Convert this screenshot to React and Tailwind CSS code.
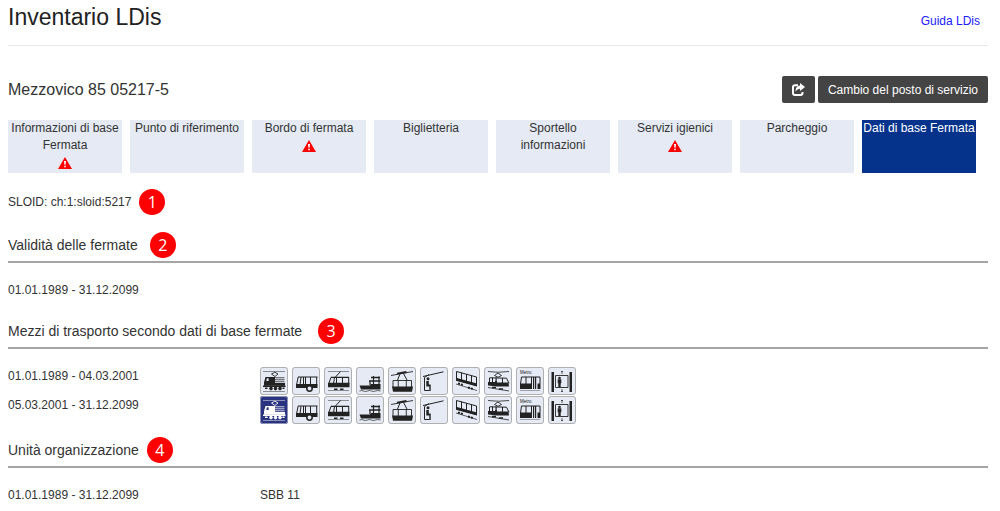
import React from "react";

const tabs = [
  { label: "Informazioni di base Fermata", warning: true },
  { label: "Punto di riferimento" },
  { label: "Bordo di fermata", warning: true },
  { label: "Biglietteria" },
  { label: "Sportello informazioni" },
  { label: "Servizi igienici", warning: true },
  { label: "Parcheggio" },
  { label: "Dati di base Fermata", active: true },
];

const drawings = {
  Treno: (
    <>
      <path d="M3 4.5h22M3 24.5h22" stroke="currentColor" strokeWidth=".8" opacity=".6" />
      <path d="M11.5 7l3.300-1.800L18 7l-3 2.500z" fill="none" stroke="currentColor" strokeWidth=".9" />
      <path d="M5.500 10h9.500v6h10v2.800H4v-3.600z" fill="currentColor" />
      <path d="M6.800 11.300h1.800v2.700H6.300z" fill="var(--tile)" />
      <path d="M15 10.700h9.500M15 12.700h9.500M15 14.700h9.500" stroke="currentColor" strokeWidth="1.100" opacity=".75" />
      <path d="M3 19.300h22.500" stroke="currentColor" strokeWidth="1.400" />
      <circle cx="11" cy="21.600" r="1.800" fill="currentColor" />
      <circle cx="15.500" cy="21.600" r="1.800" fill="currentColor" />
      <circle cx="20" cy="21.600" r="1.800" fill="currentColor" />
      <path d="M5 20.500h2.500v1.500H5zM22.500 20.500h2v1.500h-2z" fill="currentColor" />
    </>
  ),
  Autobus: (
    <>
      <path d="M6 10h19.500" stroke="currentColor" strokeWidth="1.200" />
      <path d="M4 17h21.500v4H4z" fill="currentColor" />
      <path d="M6.200 10L4.500 18M9 10l-1 8M11.500 10v8M13.500 10v8M18.500 10v8M24.700 10v8" stroke="currentColor" strokeWidth="1" />
      <circle cx="17.500" cy="21.500" r="2.700" fill="var(--tile)" stroke="currentColor" strokeWidth="1.500" />
    </>
  ),
  Tram: (
    <>
      <path d="M4 4.500h21M4 23.500h21" stroke="currentColor" strokeWidth=".8" opacity=".6" />
      <path d="M16.500 4.500L11.500 10" stroke="currentColor" />
      <path d="M7 10.300h18" stroke="currentColor" strokeWidth="1.200" />
      <path d="M4 15.800h21.500v4.400H4z" fill="currentColor" />
      <path d="M7 10.300L4.700 17M10.500 10.300L9.500 17M12.500 10.300V17M18.500 10.300V17M24.700 10.300V17" stroke="currentColor" />
      <path d="M10 22.300h3.500M16 22.300h3.500" stroke="currentColor" strokeWidth="1.600" />
    </>
  ),
  Battello: (
    <>
      <path d="M3.500 18.500h10.500l1-1.500H24.500v5.500H5z" fill="currentColor" />
      <path d="M15 10.500h9M13 14h11.500" stroke="currentColor" strokeWidth="1.300" />
      <path d="M17.500 9v8.500M23 9.500v8M14 14v4" stroke="currentColor" strokeWidth="1.200" />
      <path d="M3.500 24q2-1 4 0t4 0 4 0 4 0 5 0" fill="none" stroke="currentColor" strokeWidth=".7" />
    </>
  ),
  Cabinovia: (
    <>
      <path d="M3 8.500l22-4" stroke="currentColor" strokeWidth=".9" />
      <path d="M9 6.700l9.500-1.700" stroke="currentColor" strokeWidth="1.800" />
      <path d="M12 7L9.500 13M15.500 6.500l3.500 6.500" stroke="currentColor" />
      <path d="M5 13.500h18.500v7H5z" fill="none" stroke="currentColor" strokeWidth=".9" />
      <path d="M4 19.500h21l-1 5.300H5zM9.800 13h.9v7h-.9zM17.800 13h.9v7h-.9z" fill="currentColor" />
    </>
  ),
  Seggiovia: (
    <>
      <path d="M3 9.500L23.500 4.800" stroke="currentColor" />
      <path d="M9 7.500L4.500 10.500v13h5" fill="none" stroke="currentColor" />
      <circle cx="8" cy="11.800" r="1.500" fill="currentColor" />
      <path d="M6.300 14h2.500v3.500h1.900v6.500H9.300v-4.500h-3z" fill="currentColor" />
    </>
  ),
  Funicolare: (
    <>
      <path d="M4.500 4.500L24.500 10v8.500L4.500 13z" fill="none" stroke="currentColor" />
      <path d="M4 10.800l21 5.700v3L4 13.800zM9 5.500h1v7H9zM14 7h1v7h-1zM19 8.500h1v7h-1z" fill="currentColor" />
      <path d="M4 17l21 6.500" stroke="currentColor" strokeWidth=".7" />
      <path d="M6 16.500l5 1.500M16 20.500l5 1.500" stroke="currentColor" strokeWidth="2" strokeDasharray="2 1" />
    </>
  ),
  Cremagliera: (
    <>
      <path d="M4 4.500q10 1.500 21 0M4 20.500L25 24" fill="none" stroke="currentColor" strokeWidth=".8" />
      <path d="M10.500 8.500L14 6l3.500 2.500-3.500 1.800z" fill="none" stroke="currentColor" strokeWidth=".9" />
      <path d="M5.500 10.800l17 .4 2.500 5" fill="none" stroke="currentColor" />
      <path d="M4 15h7v-1h2v1.500h11.500l.5 4H13L4 18.500zM8 10.500h1v5H8zM11.500 10.500h1.200v5h-1.200zM18 11h1v5h-1zM5 11h1v5H5z" fill="currentColor" />
      <path d="M8 20.500h4M15 22h4" stroke="currentColor" strokeWidth="1.600" />
    </>
  ),
  Metro: (
    <>
      <text x="4" y="6.500" fontSize="4.500" fill="currentColor">Metro</text>
      <path d="M5.500 10h18.500" stroke="currentColor" strokeWidth="1.200" />
      <path d="M4 16.500h11.500V22H4zM9.500 10h1v7h-1zM15 10h1v12h-1zM17 10h1.200v12H17zM19 10h1.200v12H19zM21.500 16.500h3V22h-3zM23.500 10h1v7h-1z" fill="currentColor" />
      <path d="M5.500 10L4.500 17" stroke="currentColor" />
      <path d="M4 23.500h20" stroke="currentColor" strokeWidth=".6" opacity=".6" />
    </>
  ),
  Ascensore: (
    <>
      <path d="M3.500 5H6V25H3.500zM21.500 5H24V25h-2.500z" fill="currentColor" />
      <path d="M7.500 8.500h12.500v12H7.500z" fill="none" stroke="currentColor" strokeWidth=".9" />
      <circle cx="11.500" cy="11" r="1.300" fill="currentColor" />
      <path d="M9.700 12.300h3.600v4h-.6v3.700h-2.400v-3.700h-.6z" fill="currentColor" />
      <path d="M14 7V4M13 5l1-1 1 1M14 22V25M13 24l1 1 1-1" fill="none" stroke="currentColor" strokeWidth=".7" />
    </>
  ),
};

function Warning() {
  return (
    <svg viewBox="0 0 14 12" className="h-3 w-3.5" role="img" aria-label="Attenzione">
      <path d="M7 0l7 12H0z" fill="#ff0000" />
      <path d="M6 4h2l-.4 3.800H6.400zM6.200 8.800h1.600v1.500H6.200z" fill="#fff" />
    </svg>
  );
}

function Badge({ children }) {
  return (
    <span className="flex size-[26px] shrink-0 items-center justify-center rounded-full bg-[#ff0000] font-['Open_Sans',sans-serif] text-base leading-none text-white">
      {children}
    </span>
  );
}

function Heading({ number, gap = "gap-2", children }) {
  return (
    <h3 className={`flex h-[31px] items-start border-b-2 border-[#a5a5a5] text-sm leading-[26px] ${gap}`}>
      {children}
      <Badge>{number}</Badge>
    </h3>
  );
}

function Transport({ name, active }) {
  return (
    <svg
      viewBox="0 0 28 28"
      role="img"
      aria-label={name}
      className={`size-7 rounded-[3px] outline -outline-offset-1 ${
        active
          ? "bg-[#2a3480] text-white outline-[#8e93b5] [--tile:#2a3480]"
          : "bg-[#e5eaf4] text-[#222222] outline-[#b0b0b0] [--tile:#e5eaf4]"
      }`}
    >
      {drawings[name]}
    </svg>
  );
}

function Period({ dates, active }) {
  return (
    <div className="flex h-[29px] items-start">
      <span className="w-[252px] shrink-0 leading-[18px]">{dates}</span>
      <div className="flex gap-1">
        {Object.keys(drawings).map((name) => (
          <Transport key={name} name={name} active={name === active} />
        ))}
      </div>
    </div>
  );
}

export default function App() {
  return (
    <main className="bg-white pr-3 pb-2 pl-2 font-['Liberation_Sans',Arial,sans-serif] text-xs text-[#333333]">
      <header className="flex h-[46px] items-start justify-between border-b border-[#e8e8e8] pr-2">
        <h1 className="text-[23px] leading-[34px] text-[#222222]">Inventario LDis</h1>
        <a href="#guida" className="pt-3 leading-[18px] text-[#2020ff]">Guida LDis</a>
      </header>

      <div className="mt-[30px] flex items-center justify-between">
        <h2 className="text-base">Mezzovico 85 05217-5</h2>
        <div className="flex gap-[3px]">
          <button type="button" aria-label="Condividi" className="flex h-[27px] w-[33px] items-center justify-center rounded-xs bg-[#444444] text-white">
            <svg viewBox="0 0 14 14" className="size-3.5" aria-hidden="true">
              <path d="M7 2.300H4Q2 2.300 2 4.300V10Q2 12 4 12h5.500q2 0 2-2V9" fill="none" stroke="currentColor" strokeWidth="2" />
              <path d="M9 0l5 4-5 4V5.700Q6.500 5.500 4.500 8.500 4.500 3 9 2.500z" fill="currentColor" />
            </svg>
          </button>
          <button type="button" className="h-[27px] rounded-xs bg-[#444444] px-2.5 text-xs text-white">
            Cambio del posto di servizio
          </button>
        </div>
      </div>

      <nav className="mt-[17px] mr-3 grid grid-cols-8 gap-2" aria-label="Sezioni">
        {tabs.map((tab) => (
          <button
            key={tab.label}
            type="button"
            aria-current={tab.active ? "page" : undefined}
            className={`flex h-[53px] flex-col items-center leading-[17px] ${
              tab.active ? "bg-[#05338b] text-white" : "bg-[#e5eaf4]"
            }`}
          >
            <span>{tab.label}</span>
            {tab.warning && (
              <span className="flex h-[17px] items-center">
                <Warning />
              </span>
            )}
          </button>
        ))}
      </nav>

      <p className="mt-4 flex items-center gap-2 leading-[26px]">
        SLOID: ch:1:sloid:5217 <Badge>1</Badge>
      </p>

      <section className="mt-[17px]">
        <Heading number={2} gap="gap-3">Validità delle fermate</Heading>
        <p className="mt-[18px] leading-[18px]">01.01.1989 - 31.12.2099</p>
      </section>

      <section className="mt-[19px]">
        <Heading number={3} gap="gap-4">Mezzi di trasporto secondo dati di base fermate</Heading>
        <div className="mt-[18px]">
          <Period dates="01.01.1989 - 04.03.2001" />
          <Period dates="05.03.2001 - 31.12.2099" active="Treno" />
        </div>
      </section>

      <section className="mt-3">
        <Heading number={4}>Unità organizzazione</Heading>
        <div className="mt-[18px] flex leading-[18px]">
          <span className="w-[252px] shrink-0">01.01.1989 - 31.12.2099</span>
          <span>SBB 11</span>
        </div>
      </section>
    </main>
  );
}
